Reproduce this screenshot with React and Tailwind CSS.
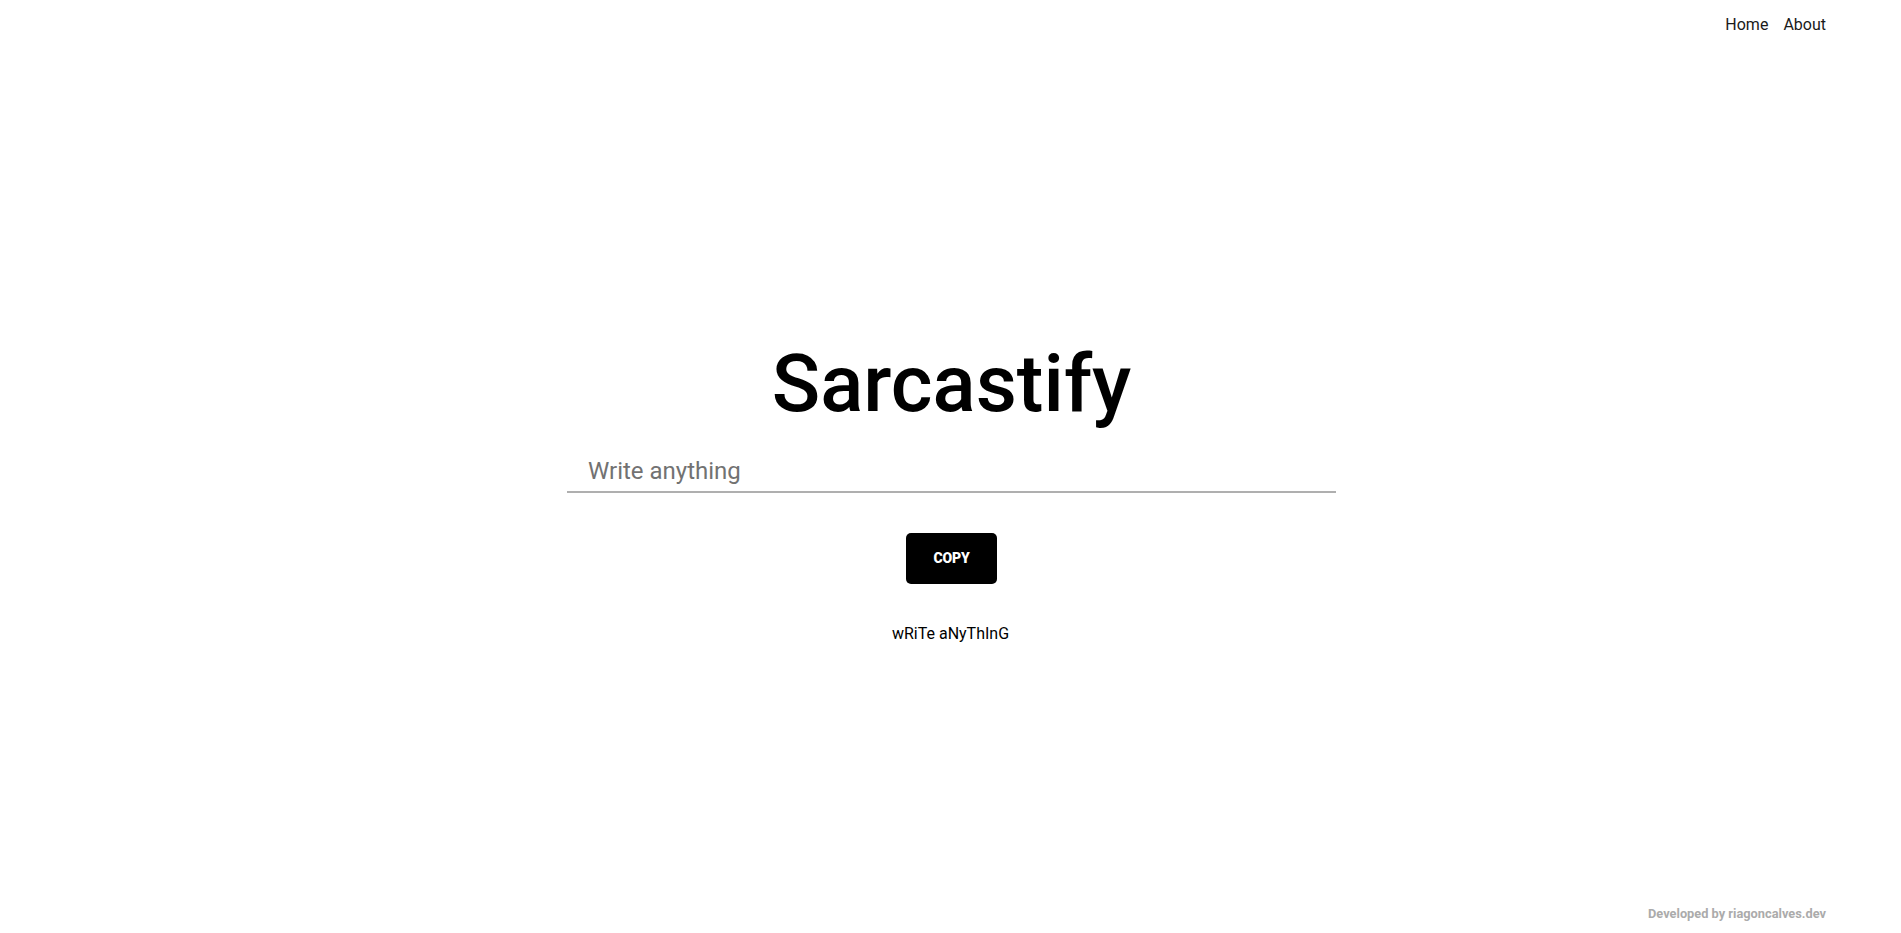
import React, { useState } from "react";

function sarcastify(s) {
  let out = "";
  let i = 0;
  for (const ch of s) {
    if (/[a-zA-Z]/.test(ch)) {
      out += i % 2 === 0 ? ch.toLowerCase() : ch.toUpperCase();
      i++;
    } else out += ch;
  }
  return out;
}

export default function App() {
  const [text, setText] = useState("");
  const result = text ? sarcastify(text) : "wRiTe aNyThInG";
  return (
    <div
      className="h-[933px] flex flex-col bg-white text-black"
      style={{ fontFamily: "Roboto, 'Noto Sans', sans-serif" }}
    >
      <nav className="flex justify-end gap-[15px] pr-[75px] pt-[13px] text-[16px] leading-6 text-[#1a1a1a]">
        <a href="#" className="hover:underline">Home</a>
        <a href="#" className="hover:underline">About</a>
      </nav>
      <main className="flex flex-col items-center">
        <h1 className="mt-[307px] translate-x-[1px] text-[80px] leading-[80px] font-medium">Sarcastify</h1>
        <div className="mt-[30px] w-[769px] border-b-2 border-[#afafaf] pt-[1px] pb-[4px] translate-x-[1px]">
          <input
            value={text}
            onChange={(e) => setText(e.target.value)}
            placeholder="Write anything"
            className="w-full pl-[21px] text-[24px] leading-8 h-8 outline-none placeholder:text-[#727272] bg-transparent"
          />
        </div>
        <button className="mt-[40px] h-[51px] w-[91px] translate-x-[1px] rounded-[5px] bg-black text-white text-[14px] font-black uppercase tracking-[-0.2px]">
          Copy
        </button>
        <p className="mt-[38px] text-[16px] leading-6">{result}</p>
      </main>
      <footer className="mt-auto flex justify-end pr-[75px] pb-[11px] text-[12.8px] leading-4 font-bold text-[#ababab]">
        Developed by riagoncalves.dev
      </footer>
    </div>
  );
}
